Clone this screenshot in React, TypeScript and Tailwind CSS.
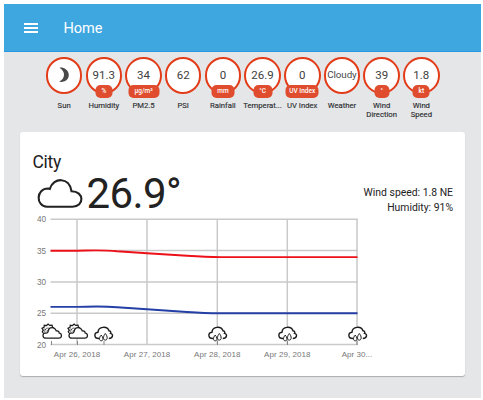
import React from "react";

type Reading = { label: string; value?: string; unit?: string; badge?: string };

const readings: Reading[] = [
  { label: "Sun" },
  { label: "Humidity", value: "91.3", unit: "%", badge: "w-[17px]" },
  { label: "PM2.5", value: "34", unit: "µg/m³", badge: "w-[31px]" },
  { label: "PSI", value: "62" },
  { label: "Rainfall", value: "0", unit: "mm", badge: "w-[23px]" },
  { label: "Temperat...", value: "26.9", unit: "°C", badge: "w-[19px]" },
  { label: "UV Index", value: "0", unit: "UV Index", badge: "w-[33px]" },
  { label: "Weather", value: "Cloudy" },
  { label: "Wind Direction", value: "39", unit: "°", badge: "w-[15px]" },
  { label: "Wind Speed", value: "1.8", unit: "kt", badge: "w-[17px]" },
];

function Gauge({ label, value, unit, badge }: Reading) {
  return (
    <div className="flex w-[39.7px] shrink-0 flex-col items-center">
      <div className="relative flex h-[36.5px] w-[36.5px] items-center justify-center rounded-full border-2 border-[#e23c18] bg-white">
        {value ? (
          <span
            className={
              value === "Cloudy"
                ? "text-[9.8px] leading-none tracking-[-0.1px] text-[#484848]"
                : "text-[11.5px] leading-none text-[#404040]"
            }
          >
            {value}
          </span>
        ) : (
          <svg viewBox="0 0 12 16" className="h-4 w-3">
            <path d="M1.5 .7C5 0 10.8 2.6 10.8 8S5 15.8 1.2 14.6C4.4 13.1 6 10.7 6 7.8S4.5 2.5 1.5 .7Z" fill="#484848" />
          </svg>
        )}
        {unit && (
          <span
            className={`absolute top-[26px] left-1/2 flex h-[12.5px] -translate-x-1/2 items-center justify-center rounded-[5px] bg-[#e04d2e] text-[6.5px] leading-none font-medium whitespace-nowrap text-white ${badge}`}
          >
            {unit}
          </span>
        )}
      </div>
      <span className="mt-[7.3px] text-center text-[7.7px] leading-[9.3px] text-[#303134] [-webkit-text-stroke:0.15px_#303134]">
        {label === "Temperat..." ? <span className="whitespace-nowrap">{label}</span> : label}
      </span>
    </div>
  );
}

const levels = [40, 35, 30, 25, 20];
const days = [
  { x: 77, label: "Apr 26, 2018" },
  { x: 147, label: "Apr 27, 2018" },
  { x: 217.3, label: "Apr 28, 2018" },
  { x: 287.3, label: "Apr 29, 2018" },
  { x: 357, label: "Apr 30..." },
];

function PartlyCloudy({ x }: { x: number }) {
  return (
    <g transform={`translate(${x} 323)`} fill="none" stroke="#1d1d1d" strokeWidth="1.25">
      <path d="M2.6 11 1 8.8 2 7.2 .7 5.2 2.7 4.3 3 2.3 5.2 2.5 6.8 1 8.4 2.4 10.7 2.2 11.3 4.2 12.5 5" fill="white" />
      <path d="M3.6 9.6C2.8 6.8 4.6 4.6 7.6 5.2M5.4 8.8 7.6 6.4M3 5.8 5 7" strokeWidth=".7" />
      <path d="M4.8 15.2C.6 15.1.8 10.3 4.4 10 6.3 10.2 7 8.7 7 7.5 8.2 3.5 13.4 3.6 15 7.9 17.3 7.4 18 9.2 17.8 10 21 10.4 21 15.2 17.4 15.2Z" fill="white" />
    </g>
  );
}

function RainCloud({ x }: { x: number }) {
  return (
    <g transform={`translate(${x} 326.3)`} stroke="#1d1d1d" strokeWidth="1.4">
      <path d="M4.5 12.2C-.2 12.3-.4 6.5 4 5.9 4.2 0 13.3-.7 15 4.5 17 4.7 17.1 6.4 16.5 7.1 20 8 18.7 12.2 15.2 12.2Z" fill="white" stroke="none" />
      <path d="M5 12.2C-.2 12.3-.4 6.5 4 5.9 4.2 0 13.3-.7 15 4.5 17 4.7 17.1 6.4 16.5 7.1 20 8 18.7 12.2 14.8 12.2" fill="none" />
      <path d="M7.2 8.8C4.9 11.2 4.9 14.4 7.2 14.5S9.6 11.2 7.2 8.8ZM11.3 7.2C9 9.8 8.8 13.7 11.3 13.8S13.8 9.8 11.3 7.2Z" fill="white" strokeWidth="1" />
    </g>
  );
}

function Chart() {
  return (
    <svg viewBox="20 212 445 154" className="block h-[154px] w-[445px]">
      <g stroke="#c9c9c9" strokeWidth="1.5">
        {levels.map((n, i) => (
          <line key={n} x1="50.5" x2="358" y1={219.3 + i * 31.3} y2={219.3 + i * 31.3} />
        ))}
        {days.map((d) => (
          <line key={d.label} x1={d.x} x2={d.x} y1="219" y2="345" />
        ))}
      </g>
      <path d="M51.5 341V345M77.5 341V345M104 341V345M217.5 341V345M287.5 341V345M357 341V345" stroke="#858585" />
      <g fill="none" strokeWidth="1.9">
        <path d="M50.5 250.7H77C94 250.4 102 249.8 117 251.2L147 253.2 187 255.8Q208 257.2 223 257.1H357.5" stroke="#ed1018" />
        <path d="M50.5 306.9H77C94 306.6 102 306 117 307.3L147 309.3 187 312Q208 313.5 223 313.3H357.5" stroke="#243fa5" />
      </g>
      <g fill="#777" fontFamily="Liberation Sans, sans-serif" fontSize="8.2">
        {levels.map((n, i) => (
          <text key={n} x="46" y={222.4 + i * 31.3} textAnchor="end">{n}</text>
        ))}
        {days.map((d) => (
          <text key={d.label} x={d.x} y="357" textAnchor="middle" fontSize="8" letterSpacing=".05">{d.label}</text>
        ))}
      </g>
      <PartlyCloudy x={41.3} />
      <PartlyCloudy x={67.3} />
      <RainCloud x={94} />
      <RainCloud x={208} />
      <RainCloud x={278} />
      <RainCloud x={348} />
    </svg>
  );
}

export default function App() {
  return (
    <div className="h-[400px] w-[483px] bg-white pt-1 pl-1 font-['Roboto',sans-serif]">
      <div className="flex h-[394px] w-[477px] flex-col bg-[#e4e6e8]">
        <header className="flex h-[47.5px] shrink-0 items-center border-b border-[#2798df] bg-[#3fa7df] pt-[1.5px] pl-[19.5px] text-white">
          <div className="flex w-3.5 flex-col gap-[2px]">
            <i className="h-[2px] bg-white" />
            <i className="h-[2px] bg-white" />
            <i className="h-[2px] bg-white" />
          </div>
          <h1 className="ml-[26px] pt-[2px] text-[14.5px] leading-none">Home</h1>
        </header>
        <section className="flex h-[80.5px] shrink-0 pt-[5.5px] pl-[40.3px]">
          {readings.map((r) => (
            <Gauge key={r.label} {...r} />
          ))}
        </section>
        <main className="ml-4 flex h-[243.5px] w-[445px] shrink-0 flex-col rounded-[3px] bg-white shadow-[0_1px_1px_#aaacae]">
          <div className="flex h-20 shrink-0 justify-between pr-3 pl-[12.5px]">
            <div className="pt-[20.5px]">
              <h2 className="text-[17.5px] leading-[18px] tracking-[-0.3px] text-[#222]">City</h2>
              <div className="flex items-start pt-[5px] pl-1">
                <svg viewBox="0 0 46 30" className="mt-[2px] h-[30px] w-[46px]" fill="none" stroke="#222" strokeWidth="2.1">
                  <path d="M10 28.8C-1.5 28.2-1.2 10.3 11.3 10.5L12.8 10.9C16.5-1 32.5-1.2 34.5 13.2 47.5 13.2 47.5 28.8 35.5 28.8Z" />
                </svg>
                <span className="ml-1 text-[42px] leading-[36px] tracking-[-0.6px] text-[#222]">26.9°</span>
              </div>
            </div>
            <div className="pt-[52.5px] text-right text-[10.4px] leading-[15.2px] text-[#222]">
              <p>Wind speed: 1.8 NE</p>
              <p>Humidity: 91%</p>
            </div>
          </div>
          <Chart />
        </main>
      </div>
    </div>
  );
}
